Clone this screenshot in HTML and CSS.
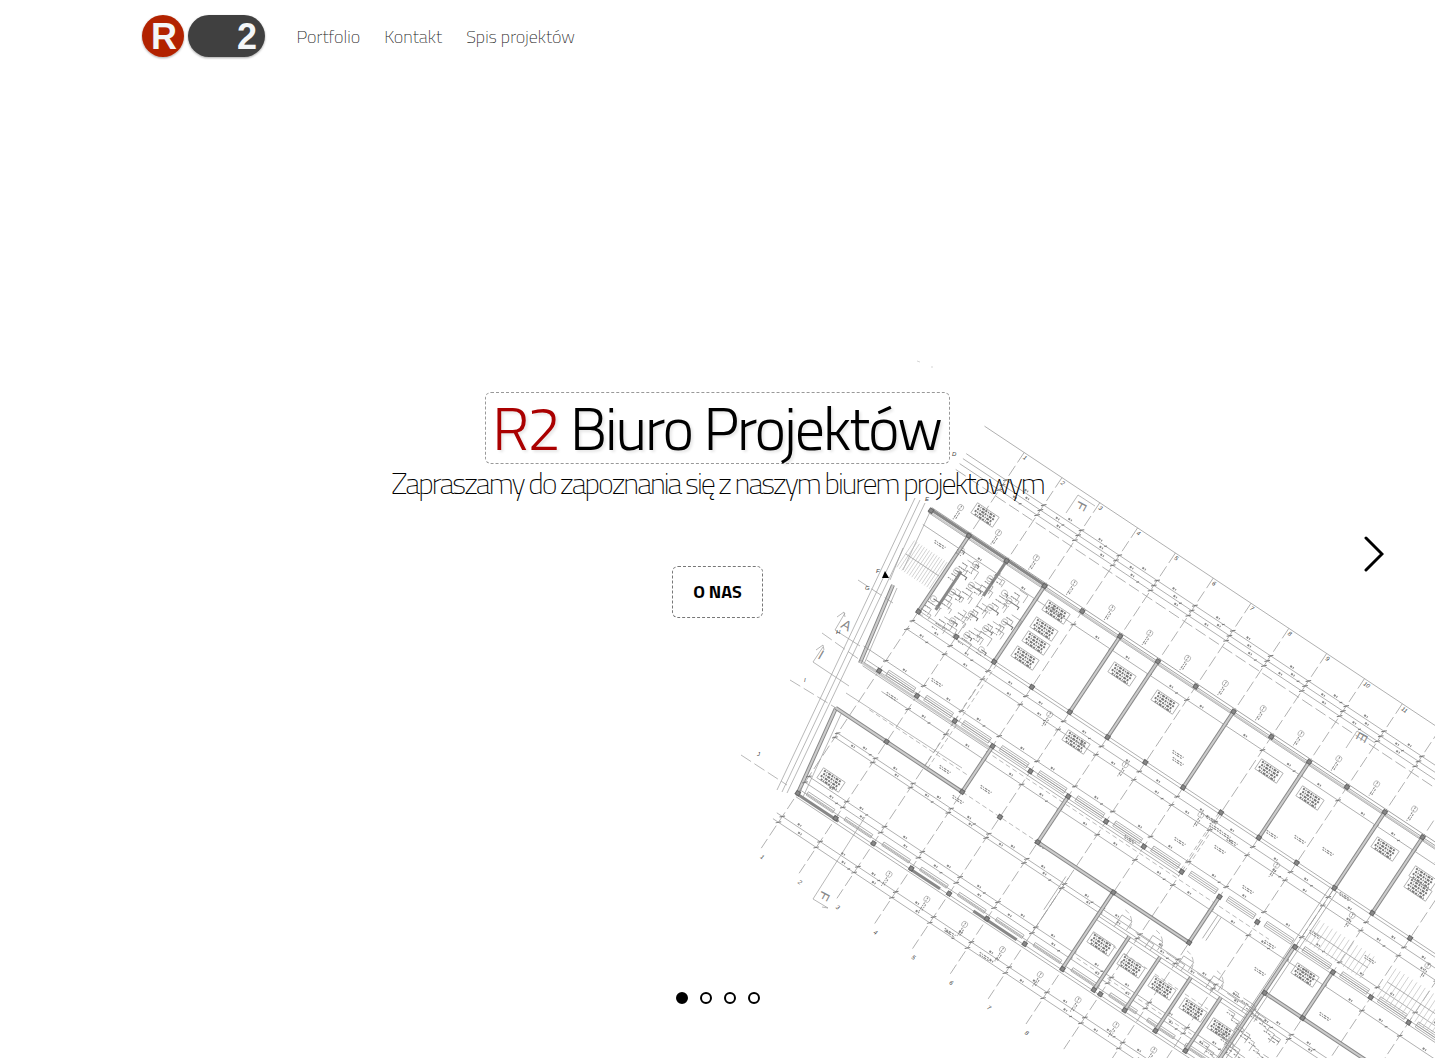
FILE: index.html
```html
<!DOCTYPE html>
<html lang="pl">
<head>
<meta charset="utf-8">
<meta name="viewport" content="width=device-width, initial-scale=1">
<title>R2 Biuro Projektów</title>
<link rel="stylesheet" href="styles.css">
</head>
<body>
<div class="page">
  <svg class="plan" viewBox="735 355 700 703" aria-hidden="true">
    <path class="faint" d="M917 361l3 1M931 367h2"/>
    <g id="plan-site"></g>
    <g id="plan-grid" transform="translate(930 510) rotate(33.6)"></g>
  </svg>

  <header class="header">
    <a class="logo" href="#" aria-label="R2">
      <svg viewBox="0 0 126 48" width="126" height="48">
        <defs>
          <filter id="soft" x="-10%" y="-10%" width="120%" height="130%">
            <feDropShadow dx="0" dy="1" stdDeviation="1" flood-color="#000" flood-opacity=".35"/>
          </filter>
        </defs>
        <g filter="url(#soft)">
          <circle cx="22" cy="23" r="21" fill="#b22400"/>
          <rect x="47" y="2" width="77" height="42" rx="21" fill="#404040"/>
        </g>
        <text class="logo-text" x="23" y="36" text-anchor="middle">R</text>
        <text class="logo-text" x="106" y="36" text-anchor="middle">2</text>
      </svg>
    </a>
    <nav class="nav">
      <a href="#portfolio">Portfolio</a>
      <a href="#kontakt">Kontakt</a>
      <a href="#spis">Spis projektów</a>
    </nav>
  </header>

  <main class="slide">
    <h1 class="title"><span class="accent">R2</span> Biuro Projektów</h1>
    <p class="tagline">Zapraszamy do zapoznania się z naszym biurem projektowym</p>
    <button class="about" type="button">O NAS</button>
  </main>

  <button class="next" type="button" aria-label="Następny">
    <svg viewBox="0 0 20 36" width="20" height="36"><path d="M2 2L18 18L2 34"/></svg>
  </button>

  <div class="dots">
    <button class="dot active" type="button" aria-label="1"></button>
    <button class="dot" type="button" aria-label="2"></button>
    <button class="dot" type="button" aria-label="3"></button>
    <button class="dot" type="button" aria-label="4"></button>
  </div>
</div>
<script src="plan.js"></script>
</body>
</html>
```
FILE: styles.css
```css
* { box-sizing: border-box; }

body {
  margin: 0;
  background: #fff;
  color: #000;
  font-family: "Titillium Web", "Open Sans", sans-serif;
}

.page {
  display: grid;
  grid-template-columns: minmax(0, 1fr);
  min-height: 100vh;
  position: relative;
  overflow: hidden;
}

.page > * { grid-area: 1 / 1; }

/* header */
.header {
  align-self: start;
  justify-self: center;
  width: 100%;
  max-width: 1154px;
  height: 74px;
  display: flex;
  align-items: center;
  gap: 30px;
  z-index: 1;
}
.logo { display: flex; }
.logo-text {
  font: bold 36px "Liberation Sans", Arial, sans-serif;
  fill: #f4f6f8;
}
.nav { display: flex; gap: 24px; }
.nav a {
  color: #222;
  font-weight: 200;
  font-size: 18px;
  line-height: 24px;
  text-decoration: none;
}

/* slide */
.slide {
  align-self: center;
  display: flex;
  flex-direction: column;
  align-items: center;
  padding-bottom: 48px;
  text-align: center;
  z-index: 1;
}
.title {
  margin: 0;
  padding: 0 8px 0 6px;
  border: 1px dashed #999;
  border-radius: 6px;
  font-weight: 300;
  font-size: 60px;
  line-height: 70px;
  letter-spacing: -2px;
  text-shadow: 2px 2px 3px rgba(0, 0, 0, .1);
}
.accent { color: #a00; }
.tagline {
  margin: 0 0 64px;
  font-weight: 200;
  font-size: 30px;
  line-height: 38px;
  letter-spacing: -2px;
}
.about {
  height: 52px;
  padding: 0 20px;
  border: 1px dashed #777;
  border-radius: 6px;
  background: transparent;
  color: #000;
  font-family: inherit;
  font-weight: 700;
  font-size: 18px;
  line-height: 24px;
}

/* slider controls */
.next {
  align-self: center;
  justify-self: end;
  display: flex;
  margin: 50px 51px 0 0;
  padding: 0;
  border: 0;
  background: none;
  z-index: 2;
}
.next path {
  fill: none;
  stroke: #000;
  stroke-width: 3;
  stroke-linecap: round;
}
.dots {
  align-self: end;
  justify-self: center;
  display: flex;
  gap: 12px;
  padding-bottom: 54px;
  z-index: 2;
}
.dot {
  width: 12px;
  height: 12px;
  padding: 0;
  border: 2px solid #000;
  border-radius: 50%;
  background: #fff;
}
.dot.active { background: #000; }

/* floor plan behind the slide */
.plan {
  position: absolute;
  right: 0;
  bottom: 0;
  width: 700px;
  height: 703px;
}
.plan path { fill: none; stroke: #888; stroke-width: .7; }
.plan .thin { stroke: #999; stroke-width: .7; }
.plan .faint { stroke: #bbb; stroke-width: .6; }
.plan .dash { stroke: #999; stroke-width: .7; stroke-dasharray: 12 4; }
.plan .fine { stroke: #999; stroke-width: .6; stroke-dasharray: 5 3; }
.plan .wall { stroke: #888; stroke-width: 4; }
.plan .core { stroke: #ccc; stroke-width: 2; }
.plan .solid { stroke: #888; stroke-width: 3; }
.plan .note { stroke: #888; stroke-width: 1; stroke-dasharray: 2 1 1 1 3 1; }
.plan .legend { stroke: #777; stroke-width: 2; stroke-dasharray: 2 1 1 1 3 1; }
.plan .tick { stroke: #777; stroke-width: 1; }
.plan .mark { fill: #888; stroke: #666; stroke-width: 1; }
.plan .ring { fill: none; stroke: #999; stroke-width: .6; }
.plan .black { fill: #000; stroke: none; }
.plan text {
  font: italic 6px "Liberation Sans", Arial, sans-serif;
  fill: #444;
}
.plan .letter { font-size: 14px; font-style: normal; fill: #888; }
```
FILE: plan.js
```js
// Floor plan. Grid coordinates: u runs along the building, v across it.
const NS = "http://www.w3.org/2000/svg";
const site = document.getElementById("plan-site");
const grid = document.getElementById("plan-grid");
const BAY = 45.4;
const axis = (k) => 1.2 + BAY * k;

function add(parent, name, attrs, text) {
  const el = document.createElementNS(NS, name);
  for (const key in attrs) el.setAttribute(key, attrs[key]);
  if (text) el.textContent = text;
  parent.appendChild(el);
}
const path = (cls, d, parent = grid) => add(parent, "path", { class: cls, d });
const h = (cls, v, a, b) => path(cls, `M${a} ${v}H${b}`);
const w = (cls, u, a, b) => path(cls, `M${u} ${a}V${b}`);
function hWall(v, a, b) { h("wall", v, a, b); h("core", v, a, b); }
function wWall(u, a, b) { w("wall", u, a, b); w("core", u, a, b); }
const column = (u, v) => add(grid, "rect", { class: "mark", x: u - 2, y: v - 2, width: 4, height: 4 });

// axis lines with their numbers
for (let k = 1; k < 19; k++) {
  w("dash", axis(k), -100, 375);
  if (k < 12) add(grid, "text", { x: axis(k) + 2, y: -94 }, String(k));
  if (k < 9) add(grid, "text", { x: axis(k) + 4, y: 384 }, String(k));
}
h("thin", -100, -1, 900);

// dimension lines with ticks and figures
const dims = [[-67, -1], [-61, -1], [-55, -1], [16, 2], [102, 46], [112, 46], [150, 20],
  [178, 60], [237, 45], [242, 45], [289, 45], [296, 45], [337, 40], [344, 40]];
dims.forEach(([v, from], n) => {
  h("thin", v, from, 900);
  for (let k = 1; k < 19; k++) {
    const u = axis(k);
    if (u < from) continue;
    path("tick", `M${u - 2} ${v + 2}l4 -4`);
    const shift = 14 + ((k * 7 + n * 5) % 16);
    path("note", `M${u + shift} ${v - 2}h5M${u + shift} ${v - 3}h4`);
    if ((k + n) % 3 === 0) path("tick", `M${u + shift + 9} ${v + 1}l2 -2`);
  }
});
h("dash", -48, -1, 900);
h("fine", 170, 180, 520);
h("fine", 200, 60, 180);

// facades
[-3, 0, 3].forEach((v) => h("", v, 0, 900));
h("core", 2, 0, 900);
h("solid", -1, 0, 140);
[305, 310, 313].forEach((v) => h("thin", v, 47, 900));
h("solid", 310, 46, 96);
h("solid", 310, 182, 218);
h("solid", 310, 258, 310);
for (let k = 1; k < 18; k++) {
  path("thin", `M${axis(k) + 8} 302h32v4h-32zM${axis(k) + 8} 304h32`);
  path("thin", `M${axis(k) + 8} 156h32v6h-32zM${axis(k) + 8} 158h32M${axis(k) + 8} 160h32`);
}

// walls along the corridors
[90, 93].forEach((v) => h("thin", v, 46, 900));
[160, 164, 167].forEach((v) => h("thin", v, 30, 410));
[160, 164].forEach((v) => h("thin", v, 546, 900));
h("core", 165, 28, 182);
hWall(217, 31, 183);
h("fine", 217, 183, 273);
hWall(217, 273, 455);
hWall(217, 545, 900);
[245, 249].forEach((v) => h("thin", v, 364, 545));

// cross walls
[1, 3, 5, 6, 8, 10, 12, 13].forEach((k) => wWall(axis(k), 0, 92));
w("solid", 60, 34, 80);
w("solid", 92, 0, 42);
wWall(axis(4), 162, 217);
wWall(axis(6), 162, 217);
wWall(455, 162, 217);
[464, 468].forEach((u) => w("thin", u, 178, 206));
wWall(364, 217, 310);
w("thin", 319, 230, 300);
w("thin", 316, 230, 270);
[402, 439, 476, 512].forEach((u) => {
  wWall(u, 245, 310);
  path("thin", `M${u - 18} 245v-14h12v10M${u + 3} 238h22v7`);
  path("fine", `M${u - 32} 262h28M${u - 32} 292h28M${u - 18} 225a14 14 0 0 1 14 14`);
});
[542, 546, 550].forEach((u) => w("thin", u, 92, 420));
wWall(545, 160, 330);
wWall(591, 162, 217);
[137, 141].forEach((u) => w("fine", u, 92, 217));
[408, 412].forEach((u) => w("fine", u, 92, 162));

// stairs
for (let i = 0; i < 14; i++) {
  w("faint", 552 + i * 5, 126, 152);
  w("faint", 642 + i * 5, 124, 158);
  w("faint", 4 + i * 3, 34, 66);
}
path("thin", "M552 139h66M642 140h66M4 50h40");

// sanitary rooms of the first bays
for (let i = 0; i < 64; i++) {
  const u = 48 + ((i * 37) % 80);
  const v = 16 + ((i * 23) % 76);
  path(i % 4 ? "thin" : "tick", `M${u} ${v}h${4 + (i % 5) * 2}v${3 + (i % 4) * 2}`);
  if (i % 4 === 0) add(grid, "circle", { class: "ring", cx: u, cy: v, r: 3 });
  path("note", `M${u - 3} ${v + 5}h6`);
}
// service shaft at the lower right
for (let i = 0; i < 36; i++) {
  const u = 520 + ((i * 29) % 60);
  const v = 232 + ((i * 31) % 84);
  path("thin", `M${u} ${v}h${5 + (i % 4) * 3}v${4 + (i % 3) * 3}`);
  path("note", `M${u} ${v + 3}h8`);
}

// columns
for (let k = 0; k < 19; k++) {
  column(axis(k), 0);
  if (k > 0) [91, 162].forEach((v) => column(axis(k), v));
  if (k > 0 && k < 10) column(axis(k), 309);
}
[2, 4, 5, 6, 8, 10, 12, 13].forEach((k) => column(axis(k), 217));
[402, 439, 476, 512].forEach((u) => column(u, 309));

// window tags
for (let k = 0; k < 15; k++) {
  [[23, -19], [30, 104], [30, 326]].forEach(([du, v], row) => {
    if (row && k < 3 || row === 1 && k % 2) return;
    const u = axis(k) + du;
    add(grid, "circle", { class: "ring", cx: u, cy: v, r: 3 });
    path("note", `M${u} ${v - 2}v4M${u} ${v + 4}v10M${u + 2} ${v + 5}v7`);
  });
}

// room legends
[[985, 515], [1056, 612], [1044, 629], [1036, 643], [1025, 658], [1122, 674], [1165, 702],
  [1076, 742], [1269, 771], [1310, 798], [1385, 849], [1423, 878], [1418, 889], [831, 780],
  [1101, 944], [1131, 966], [1162, 988], [1193, 1010], [1221, 1030], [1305, 975],
].forEach(([x, y]) => {
  add(site, "path", {
    class: "legend",
    transform: `translate(${x} ${y}) rotate(34)`,
    d: "M-11 -4h20M-10 -1h20M-11 2h21M-9 5h19",
  });
  add(site, "path", {
    class: "thin",
    transform: `translate(${x} ${y}) rotate(34)`,
    d: "M-13 -6h26v12h-26z",
  });
});
// loose captions
[[940, 545], [937, 683], [892, 697], [945, 770], [958, 800], [986, 790], [1040, 845], [1130, 840],
  [1178, 755], [1178, 762], [1180, 842], [1215, 828], [1225, 835], [1232, 842], [1300, 840],
  [1328, 852], [1272, 835], [1315, 935], [1370, 960], [1248, 890], [1270, 945], [1260, 972],
  [1325, 1017], [950, 933], [985, 957], [1212, 820], [1220, 850], [1345, 897],
].forEach(([x, y]) => add(site, "path", {
  class: "note",
  transform: `translate(${x} ${y}) rotate(34)`,
  d: "M-7 -1h14M-6 1h11",
}));

// slanted gable
path("thin", "M915 498L777 790M920 500L782 792M925 503L787 793M930 512L903 570M903 548L890 580", site);
path("wall", "M893 585L860 663M836 708L797 795", site);
path("core", "M893 585L860 663M836 708L797 795", site);
path("thin", "M897 588L864 664M842 712L803 797", site);
path("dash", "M741 755L787 785M790 680L836 708M822 633L860 660M858 580L893 603", site);
path("black", "M882 578l7 0l-4 -7z", site);
path("thin", "M846 693L962 768M860 660L917 695", site);

// section marks
path("thin", "M845 617l-1 -5l-7 5M845 613L835 630L860 646M824 650l-1 -5l-7 5M823 647L813 662L849 686", site);
path("thin", "M865 817L813 899L828 908L822 907M1066 513L1078 495L1095 506M1346 748L1357 731L1375 743", site);
[[1079, 500, 118, "F"], [1360, 731, 118, "E"], [822, 890, 118, "F"], [840, 627, 30, "A"], [817, 658, 30, "I"]]
  .forEach(([x, y, r, letter]) => add(site, "text", {
    class: "letter", transform: `translate(${x} ${y}) rotate(${r})`,
  }, letter));
[[952, 456, "D"], [925, 501, "E"], [876, 573, "F"], [865, 590, "G"], [836, 634, "H"], [804, 682, "I"], [757, 756, "J"]]
  .forEach(([x, y, letter]) => add(site, "text", { x, y }, letter));
```
